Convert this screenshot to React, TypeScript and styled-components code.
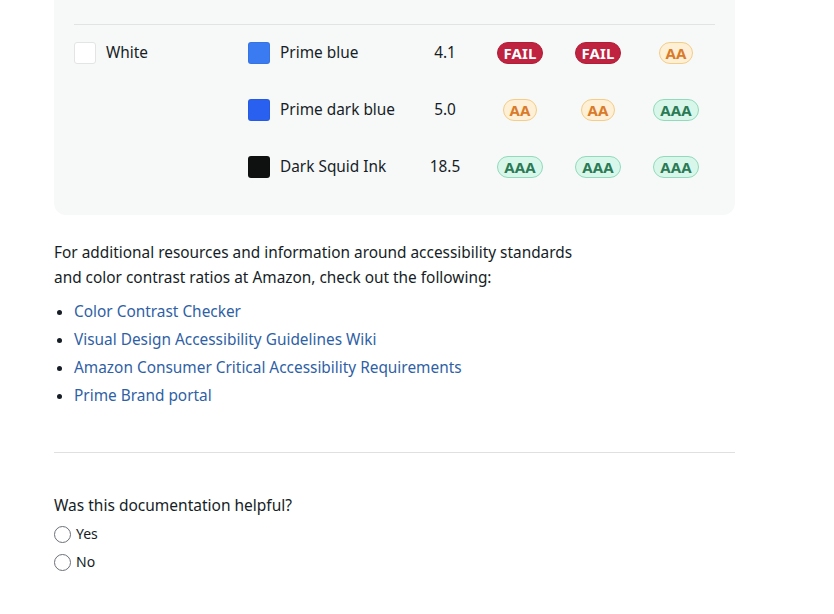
import React from "react";
import styled, { createGlobalStyle } from "styled-components";

const Global = createGlobalStyle`
  html, body { margin: 0; padding: 0; background: #ffffff; }
  body { font-family: "Noto Sans", "Open Sans", Arial, sans-serif; color: #161d26; }
  * { box-sizing: border-box; }
`;

const Page = styled.div`
  width: 681px;
  margin-left: 54px;
  display: flex;
  flex-direction: column;
`;

const Card = styled.div`
  background: #f7f8f8;
  border-radius: 0 0 12px 12px;
  padding: 24px 20px 19px;
`;

const Divider = styled.div`
  height: 1px;
  background: #e2e4e4;
`;

const Table = styled.div`
  display: grid;
  grid-template-columns: 174px 161px 72px 78px 78px 78px;
  grid-auto-rows: 57px;
  align-items: center;
`;

const Cell = styled.div<{ $center?: boolean }>`
  display: flex;
  align-items: center;
  justify-content: ${(p) => (p.$center ? "center" : "flex-start")};
  gap: 10px;
  font-size: 15.4px;
  height: 100%;
  padding-bottom: 2px;
`;

const Swatch = styled.span<{ $color: string }>`
  width: 22px;
  height: 22px;
  border-radius: 3px;
  background: ${(p) => p.$color};
  border: 1px solid ${(p) => (p.$color === "#ffffff" ? "#e3e5e5" : "rgba(0,0,0,0.06)")};
  flex: none;
`;

type Level = "FAIL" | "AA" | "AAA";

const badgeColors: Record<Level, { bg: string; border: string; fg: string }> = {
  FAIL: { bg: "#c0233f", border: "#b01f38", fg: "#ffffff" },
  AA: { bg: "#fdf0d6", border: "#f5cd86", fg: "#d97b2a" },
  AAA: { bg: "#d8f7ea", border: "#91dbbc", fg: "#2b7a55" },
};

const Badge = styled.span<{ $level: Level }>`
  display: inline-flex;
  align-items: center;
  justify-content: center;
  height: 22px;
  padding: 0 6px;
  border-radius: 11px;
  font-size: 15px;
  font-weight: 700;
  letter-spacing: 0.1px;
  background: ${(p) => badgeColors[p.$level].bg};
  border: 1px solid ${(p) => badgeColors[p.$level].border};
  color: ${(p) => badgeColors[p.$level].fg};
`;

const Paragraph = styled.p`
  margin: 25px 0 0;
  max-width: 540px;
  font-size: 15.4px;
  line-height: 25px;
`;

const LinkList = styled.ul`
  margin: 8px 0 0;
  padding-left: 20px;
  font-size: 15.4px;
  line-height: 28px;
  li::marker { color: #161d26; }
`;

const Link = styled.a`
  color: #2f5fa5;
  text-decoration: none;
`;

const Rule = styled.hr`
  margin: 42px 0 0;
  border: none;
  height: 1px;
  background: #dfe1e1;
`;

const Question = styled.div`
  margin-top: 40px;
  font-size: 15.5px;
  line-height: 24px;
`;

const Radios = styled.div`
  margin-top: 7px;
  display: flex;
  flex-direction: column;
  gap: 8px;
`;

const RadioRow = styled.label`
  display: flex;
  align-items: center;
  gap: 5px;
  font-size: 14px;
  line-height: 20px;
`;

const RadioCircle = styled.span`
  width: 17px;
  height: 17px;
  border-radius: 50%;
  border: 1px solid #6b7178;
  background: #fff;
  flex: none;
`;

const rows: { bg?: [string, string]; fg: [string, string]; ratio: string; levels: Level[] }[] = [
  { bg: ["White", "#ffffff"], fg: ["Prime blue", "#3a7bf2"], ratio: "4.1", levels: ["FAIL", "FAIL", "AA"] },
  { fg: ["Prime dark blue", "#2a60ef"], ratio: "5.0", levels: ["AA", "AA", "AAA"] },
  { fg: ["Dark Squid Ink", "#0f1111"], ratio: "18.5", levels: ["AAA", "AAA", "AAA"] },
];

const links = [
  "Color Contrast Checker",
  "Visual Design Accessibility Guidelines Wiki",
  "Amazon Consumer Critical Accessibility Requirements",
  "Prime Brand portal",
];

export default function App() {
  return (
    <>
      <Global />
      <Page>
        <Card>
          <Divider />
          <Table>
            {rows.map((r, i) => (
              <React.Fragment key={i}>
                <Cell>
                  {r.bg && (
                    <>
                      <Swatch $color={r.bg[1]} />
                      <span>{r.bg[0]}</span>
                    </>
                  )}
                </Cell>
                <Cell>
                  <Swatch $color={r.fg[1]} />
                  <span>{r.fg[0]}</span>
                </Cell>
                <Cell $center>{r.ratio}</Cell>
                {r.levels.map((l, j) => (
                  <Cell $center key={j}>
                    <Badge $level={l}>{l}</Badge>
                  </Cell>
                ))}
              </React.Fragment>
            ))}
          </Table>
        </Card>
        <Paragraph>
          For additional resources and information around accessibility standards and color contrast ratios at
          Amazon, check out the following:
        </Paragraph>
        <LinkList>
          {links.map((l) => (
            <li key={l}>
              <Link href="#">{l}</Link>
            </li>
          ))}
        </LinkList>
        <Rule />
        <Question>Was this documentation helpful?</Question>
        <Radios>
          <RadioRow>
            <RadioCircle />
            Yes
          </RadioRow>
          <RadioRow>
            <RadioCircle />
            No
          </RadioRow>
        </Radios>
      </Page>
    </>
  );
}
